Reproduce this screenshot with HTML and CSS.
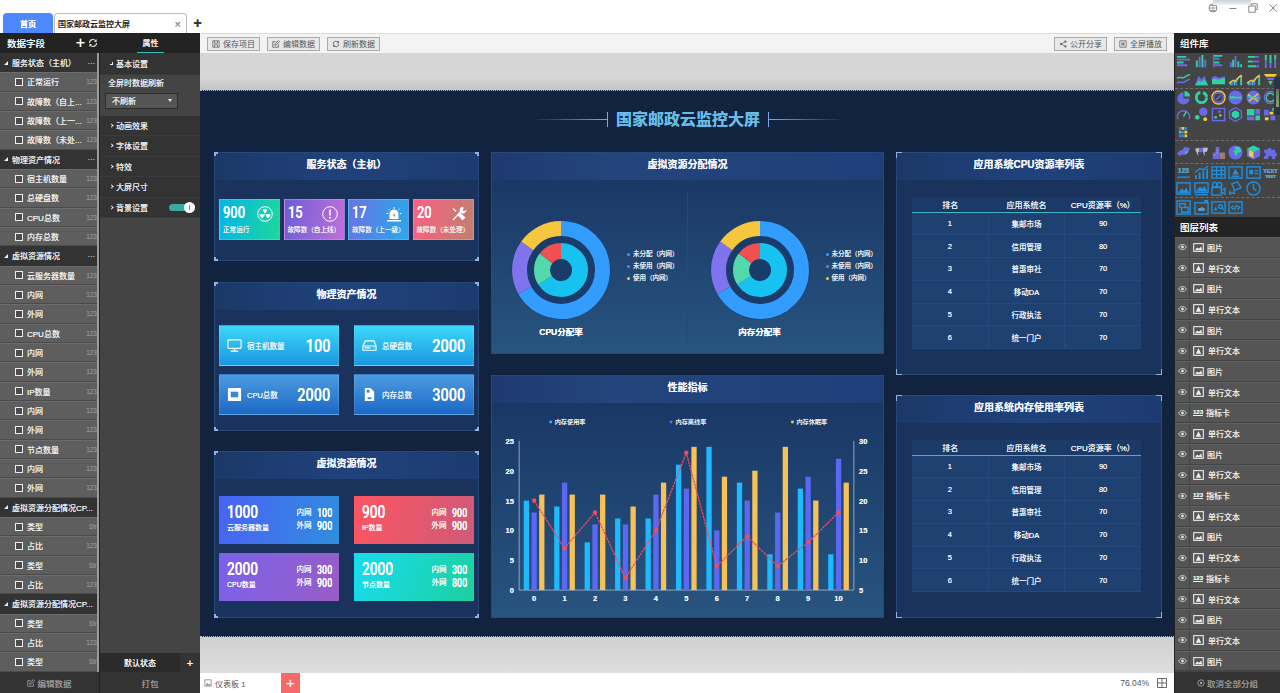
FILE: index.html
```html
<!DOCTYPE html>
<html lang="zh">
<head>
<meta charset="utf-8">
<title>国家邮政云监控大屏</title>
<link rel="stylesheet" href="styles.css">
</head>
<body>
<svg class="defs" width="0" height="0">
  <symbol id="i-pic" viewBox="0 0 12 10"><rect x=".7" y=".7" width="10.6" height="8.6" fill="none" stroke="#eee" stroke-width="1.2"/><path d="M2 8l2.500-3 2 1.500L9 4l1 4z" fill="#eee"/></symbol>
  <symbol id="i-txt" viewBox="0 0 12 11"><rect x=".7" y=".7" width="10.600" height="9.600" fill="none" stroke="#eee" stroke-width="1.200"/><path d="M6 2.500L9 8.500H3z" fill="#eee"/></symbol>
  <symbol id="i-eye" viewBox="0 0 10 7"><path d="M.5 3.500C2 1 3.500.5 5 .5s3 .5 4.500 3C8 6 6.500 6.500 5 6.500S2 6 .5 3.500z" fill="none" stroke="#ddd"/><circle cx="5" cy="3.500" r="1.700" fill="#ddd"/></symbol>
  <symbol id="donut" viewBox="0 0 100 100">
    <circle cx="50" cy="50" r="49.500" fill="#1a3c6a"/>
    <g fill="none" transform="rotate(-90 50 50)">
      <circle class="d-blue" cx="50" cy="50" r="41.500" stroke-width="15" stroke-dasharray="174 260.800"/>
      <circle class="d-purple" cx="50" cy="50" r="41.500" stroke-width="15" stroke-dasharray="47 260.800" stroke-dashoffset="-174"/>
      <circle class="d-yellow" cx="50" cy="50" r="41.500" stroke-width="15" stroke-dasharray="39.800 260.800" stroke-dashoffset="-221"/>
      <circle class="d-cyan" cx="50" cy="50" r="19" stroke-width="16" stroke-dasharray="78 119.400"/>
      <circle class="d-green" cx="50" cy="50" r="19" stroke-width="16" stroke-dasharray="23.500 119.400" stroke-dashoffset="-78"/>
      <circle class="d-red" cx="50" cy="50" r="19" stroke-width="16" stroke-dasharray="17.900 119.400" stroke-dashoffset="-101.500"/>
    </g>
  </symbol>
</svg>

<header class="tabbar">
  <div class="tab-home">首页</div>
  <div class="tab-doc"><span>国家邮政云监控大屏</span><span class="tab-x">×</span></div>
  <div class="tab-add">+</div>
  <div class="winctl">
    <svg class="w-ico" viewBox="0 0 10 10"><circle cx="5" cy="5" r="4" fill="none" stroke="#888"/><path d="M1 5h8M5 1v8M2 2.500h6M2 7.500h6" stroke="#888" stroke-width=".7"/></svg>
    <svg class="w-ico" viewBox="0 0 10 10"><path d="M1.500 5.500h7" stroke="#888"/></svg>
    <svg class="w-ico" viewBox="0 0 10 10"><path d="M3.500 2.500V.8h5.700v5.700H7.500M.8 3h6.500v6.200H.8z" fill="none" stroke="#888"/></svg>
    <svg class="w-ico" viewBox="0 0 10 10"><path d="M1.500 1.500l7 7M8.500 1.500l-7 7" stroke="#888"/></svg>
  </div>
  <div class="win-strip"></div>
</header>

<div class="app">
  <aside class="fields">
    <div class="dark-head fields-head"><span>数据字段</span><span class="head-tools"><b>+</b><svg class="refresh" viewBox="0 0 10 10"><path d="M1.500 5a3.500 3.500 0 0 1 6.500-1.800M8.500 5A3.500 3.500 0 0 1 2 6.800" fill="none" stroke="#ddd" stroke-width="1.100"/><path d="M8.600 1v3H6M1.400 9V6H4" fill="#ddd"/></svg></span></div>
    <div class="field-list">
      <div class="f-group"><i class="tri"></i><span class="f-name">服务状态（主机）</span><em>···</em></div>
      <div class="f-row"><i class="chk"></i><span class="f-name">正常运行</span><u>123</u></div>
      <div class="f-row"><i class="chk"></i><span class="f-name">故障数（自上...</span><u>123</u></div>
      <div class="f-row"><i class="chk"></i><span class="f-name">故障数（上一...</span><u>123</u></div>
      <div class="f-row"><i class="chk"></i><span class="f-name">故障数（未处...</span><u>123</u></div>
      <div class="f-group"><i class="tri"></i><span class="f-name">物理资产情况</span><em>···</em></div>
      <div class="f-row"><i class="chk"></i><span class="f-name">宿主机数量</span><u>123</u></div>
      <div class="f-row"><i class="chk"></i><span class="f-name">总硬盘数</span><u>123</u></div>
      <div class="f-row"><i class="chk"></i><span class="f-name">CPU总数</span><u>123</u></div>
      <div class="f-row"><i class="chk"></i><span class="f-name">内存总数</span><u>123</u></div>
      <div class="f-group"><i class="tri"></i><span class="f-name">虚拟资源情况</span><em>···</em></div>
      <div class="f-row"><i class="chk"></i><span class="f-name">云服务器数量</span><u>123</u></div>
      <div class="f-row"><i class="chk"></i><span class="f-name">内网</span><u>123</u></div>
      <div class="f-row"><i class="chk"></i><span class="f-name">外网</span><u>123</u></div>
      <div class="f-row"><i class="chk"></i><span class="f-name">CPU总数</span><u>123</u></div>
      <div class="f-row"><i class="chk"></i><span class="f-name">内网</span><u>123</u></div>
      <div class="f-row"><i class="chk"></i><span class="f-name">外网</span><u>123</u></div>
      <div class="f-row"><i class="chk"></i><span class="f-name">IP数量</span><u>123</u></div>
      <div class="f-row"><i class="chk"></i><span class="f-name">内网</span><u>123</u></div>
      <div class="f-row"><i class="chk"></i><span class="f-name">外网</span><u>123</u></div>
      <div class="f-row"><i class="chk"></i><span class="f-name">节点数量</span><u>123</u></div>
      <div class="f-row"><i class="chk"></i><span class="f-name">内网</span><u>123</u></div>
      <div class="f-row"><i class="chk"></i><span class="f-name">外网</span><u>123</u></div>
      <div class="f-group"><i class="tri"></i><span class="f-name">虚拟资源分配情况CP...</span></div>
      <div class="f-row"><i class="chk"></i><span class="f-name">类型</span><u>Str</u></div>
      <div class="f-row"><i class="chk"></i><span class="f-name">占比</span><u>123</u></div>
      <div class="f-row"><i class="chk"></i><span class="f-name">类型</span><u>Str</u></div>
      <div class="f-row"><i class="chk"></i><span class="f-name">占比</span><u>123</u></div>
      <div class="f-group"><i class="tri"></i><span class="f-name">虚拟资源分配情况CP...</span></div>
      <div class="f-row"><i class="chk"></i><span class="f-name">类型</span><u>Str</u></div>
      <div class="f-row"><i class="chk"></i><span class="f-name">占比</span><u>123</u></div>
      <div class="f-row"><i class="chk"></i><span class="f-name">类型</span><u>Str</u></div>
    </div>
    <div class="foot">
      <svg class="foot-ico" viewBox="0 0 10 10"><path d="M8 5.500V9H1V2h3.500M3.500 6.500l.3-1.800L8 .8 9.400 2.200 5.300 6.200z" fill="none" stroke="#aaa"/></svg>编辑数据
    </div>
  </aside>

  <aside class="props">
    <div class="dark-head props-head"><span class="props-tab">属性</span></div>
    <div class="p-sec p-open"><i class="arr-d"></i>基本设置</div>
    <div class="p-body">
      <div class="p-label">全屏时数据刷新</div>
      <div class="p-select"><span>不刷新</span><i></i></div>
    </div>
    <div class="p-sec"><i class="arr-r"></i>动画效果</div>
    <div class="p-sec"><i class="arr-r"></i>字体设置</div>
    <div class="p-sec"><i class="arr-r"></i>特效</div>
    <div class="p-sec"><i class="arr-r"></i>大屏尺寸</div>
    <div class="p-sec"><i class="arr-r"></i>背景设置<span class="switch"><i></i></span></div>
    <div class="p-fill"></div>
    <div class="state-row"><span class="state-name">默认状态</span><span class="state-add">+</span></div>
    <div class="foot">打包</div>
  </aside>

  <main class="center">
    <div class="toolbar">
      <div class="tb-btn"><svg viewBox="0 0 10 10"><path d="M1 1h8v8H1zM3 1v3h4V1M3 9V6h4v3" fill="none" stroke="#666"/></svg>保存项目</div>
      <div class="tb-btn"><svg viewBox="0 0 10 10"><path d="M8 5.500V9H1V2h3.500M3.500 6.500l.3-1.800L8 .8 9.400 2.200 5.300 6.200z" fill="none" stroke="#555"/></svg>编辑数据</div>
      <div class="tb-btn"><svg viewBox="0 0 10 10"><path d="M1.500 5a3.500 3.500 0 0 1 6.500-1.800M8.500 5A3.500 3.500 0 0 1 2 6.800" fill="none" stroke="#555"/><path d="M8.600 1v3H6M1.400 9V6H4" fill="#555"/></svg>刷新数据</div>
      <div class="tb-gap"></div>
      <div class="tb-btn"><svg viewBox="0 0 10 10"><path d="M8 2L2.500 5 8 8" fill="none" stroke="#666"/><circle cx="8" cy="2" r="1.400" fill="#666"/><circle cx="2.500" cy="5" r="1.400" fill="#666"/><circle cx="8" cy="8" r="1.400" fill="#666"/></svg>公开分享</div>
      <div class="tb-btn"><svg viewBox="0 0 10 10"><path d="M1 1h8v8H1z" fill="none" stroke="#666"/><path d="M3 3h4v4H3z" fill="#888"/></svg>全屏播放</div>
    </div>
    <div class="stage">
      <div class="screen">
        <div class="screen-title">
          <i class="deco deco-l"></i><i class="tick"></i>
          <h1>国家邮政云监控大屏</h1>
          <i class="tick"></i><i class="deco deco-r"></i>
        </div>
        <div class="board">
          <div class="col col-a">
            <section class="panel corners p-status">
              <h2>服务状态（主机）</h2>
              <div class="status-cards">
                <div class="s-card c-teal"><div class="s-top"><span class="digi">900</span>
                  <svg viewBox="0 0 16 16"><circle cx="8" cy="8" r="7.300" fill="none" stroke="#fff"/><path d="M8 7.800L5.500 3.800a5 5 0 0 1 5 0zM8 8.200l2.500 4a5 5 0 0 0 3-4.200zM8 8.200H2.600a5 5 0 0 0 3 4.200z" fill="#fff"/></svg></div><div class="s-name">正常运行</div></div>
                <div class="s-card c-violet"><div class="s-top"><span class="digi">15</span>
                  <svg viewBox="0 0 16 16"><circle cx="8" cy="8" r="7.300" fill="none" stroke="#fff"/><path d="M8 3.500v6" stroke="#fff" stroke-width="1.600"/><circle cx="8" cy="11.800" r="1" fill="#fff"/></svg></div><div class="s-name">故障数（自上线）</div></div>
                <div class="s-card c-azure"><div class="s-top"><span class="digi">17</span>
                  <svg viewBox="0 0 16 16"><path d="M3.500 13V8a4.500 4.500 0 0 1 9 0v5zM1 14h14v1.500H1z" fill="#fff"/><path d="M8 1v1.800M2.500 3l1.300 1.300M13.500 3l-1.300 1.300M.6 7.500h1.600M13.800 7.500h1.600" stroke="#fff"/><path d="M8.800 6.500L6.700 9.500h1.500l-.8 2.500 2.200-3.200H8z" fill="#3a90e0"/></svg></div><div class="s-name">故障数（上一级）</div></div>
                <div class="s-card c-rose"><div class="s-top"><span class="digi">20</span>
                  <svg viewBox="0 0 16 16"><path d="M2 14L11 4.500M11 1.500a3 3 0 0 0-1.500 4l1 1a3 3 0 0 0 4-1.500l-2 1-1.500-1.500 1-2.500z" fill="#fff" stroke="#fff" stroke-width="1.200"/><path d="M2.500 2l-1 1 3 3 1-1zM6 8.500l5.500 6 3-3L8.500 6z" fill="#fff"/></svg></div><div class="s-name">故障数（未处理）</div></div>
              </div>
            </section>

            <section class="panel corners p-phys">
              <h2>物理资产情况</h2>
              <div class="phys-grid">
                <div class="ph-card ph-cyan"><svg viewBox="0 0 16 14"><rect x="1" y="1" width="14" height="9" rx="1" fill="none" stroke="#fff" stroke-width="1.200"/><path d="M4 13h8M8 10v3" stroke="#fff" stroke-width="1.200"/></svg><span class="ph-name">宿主机数量</span><span class="digi digi-l">100</span></div>
                <div class="ph-card ph-cyan"><svg viewBox="0 0 16 14"><path d="M1 7.500L3.500 2h9L15 7.500V12H1zM1 7.500h14" fill="none" stroke="#fff" stroke-width="1.200"/><path d="M3 9.500h6M12 9.500h1" stroke="#fff" stroke-width="1.200"/></svg><span class="ph-name">总硬盘数</span><span class="digi digi-l">2000</span></div>
                <div class="ph-card ph-blue"><svg viewBox="0 0 16 16"><rect x="1" y="1" width="14" height="14" rx="1" fill="#fff"/><rect x="4" y="5" width="8" height="6" fill="#3a85d8"/></svg><span class="ph-name">CPU总数</span><span class="digi digi-l">2000</span></div>
                <div class="ph-card ph-blue"><svg viewBox="0 0 16 16"><path d="M3 1h6l4 4v10H3z" fill="#fff"/><rect x="5" y="3" width="3" height="3" fill="#3a85d8"/><rect x="6" y="11" width="4" height="2" fill="#3a85d8"/></svg><span class="ph-name">内存总数</span><span class="digi digi-l">3000</span></div>
              </div>
            </section>

            <section class="panel corners p-virt">
              <h2>虚拟资源情况</h2>
              <div class="virt-grid">
                <div class="v-card v-blue"><div class="v-main"><span class="digi digi-l">1000</span><span class="v-name">云服务器数量</span></div><div class="v-side"><div><span>内网</span><span class="digi">100</span></div><div><span>外网</span><span class="digi">900</span></div></div></div>
                <div class="v-card v-red"><div class="v-main"><span class="digi digi-l">900</span><span class="v-name">IP数量</span></div><div class="v-side"><div><span>内网</span><span class="digi">900</span></div><div><span>外网</span><span class="digi">900</span></div></div></div>
                <div class="v-card v-purple"><div class="v-main"><span class="digi digi-l">2000</span><span class="v-name">CPU数量</span></div><div class="v-side"><div><span>内网</span><span class="digi">300</span></div><div><span>外网</span><span class="digi">900</span></div></div></div>
                <div class="v-card v-teal"><div class="v-main"><span class="digi digi-l">2000</span><span class="v-name">节点数量</span></div><div class="v-side"><div><span>内网</span><span class="digi">300</span></div><div><span>外网</span><span class="digi">800</span></div></div></div>
              </div>
            </section>
          </div>

          <div class="col col-b">
            <section class="panel p-alloc">
              <h2>虚拟资源分配情况</h2>
              <div class="alloc">
                <div class="alloc-half">
                  <div class="donut-wrap"><svg class="donut"><use href="#donut"/></svg><div class="donut-name">CPU分配率</div></div>
                  <ul class="legend"><li class="l-b">未分配（内网）</li><li class="l-p">未使用（内网）</li><li class="l-y">使用（内网）</li></ul>
                </div>
                <div class="alloc-half">
                  <div class="donut-wrap"><svg class="donut"><use href="#donut"/></svg><div class="donut-name">内存分配率</div></div>
                  <ul class="legend"><li class="l-b">未分配（内网）</li><li class="l-p">未使用（内网）</li><li class="l-y">使用（内网）</li></ul>
                </div>
              </div>
            </section>
            <section class="panel p-perf">
              <h2>性能指标</h2>
              <svg class="chart" viewBox="0 0 393 215">
                <g class="leg-t">
                  <circle class="s-c" cx="59" cy="19" r="1.500"/><text x="63" y="21.500">内存使用率</text>
                  <circle class="s-p" cx="180" cy="19" r="1.500"/><text x="184.500" y="21.500">内存离线率</text>
                  <circle class="s-y" cx="302" cy="19" r="1.500"/><text x="306" y="21.500">内存休眠率</text>
                </g>
                <path class="axis" d="M27.300 38V188H363.700V38"/>
                <g class="ax-t">
                  <text x="22" y="191" text-anchor="end">0</text><text x="22" y="161" text-anchor="end">5</text><text x="22" y="131" text-anchor="end">10</text><text x="22" y="101" text-anchor="end">15</text><text x="22" y="71" text-anchor="end">20</text><text x="22" y="41" text-anchor="end">25</text>
                  <text x="369" y="191">5</text><text x="369" y="161">10</text><text x="369" y="131">15</text><text x="369" y="101">20</text><text x="369" y="71">25</text><text x="369" y="41">30</text>
                  <text x="42.300" y="199" text-anchor="middle">0</text><text x="72.900" y="199" text-anchor="middle">1</text><text x="103.500" y="199" text-anchor="middle">2</text><text x="134.100" y="199" text-anchor="middle">3</text><text x="164.700" y="199" text-anchor="middle">4</text><text x="195.300" y="199" text-anchor="middle">5</text><text x="225.900" y="199" text-anchor="middle">6</text><text x="256.500" y="199" text-anchor="middle">7</text><text x="287.100" y="199" text-anchor="middle">8</text><text x="317.700" y="199" text-anchor="middle">9</text><text x="348.300" y="199" text-anchor="middle">10</text>
                </g>
                <g class="s-c">
                  <rect x="31.900" y="98" width="5.300" height="90"/><rect x="62.500" y="104" width="5.300" height="84"/><rect x="93.100" y="140" width="5.300" height="48"/><rect x="123.700" y="116" width="5.300" height="72"/><rect x="154.300" y="116" width="5.300" height="72"/><rect x="184.900" y="62" width="5.300" height="126"/><rect x="215.500" y="44" width="5.300" height="144"/><rect x="246.100" y="80" width="5.300" height="108"/><rect x="276.700" y="152" width="5.300" height="36"/><rect x="307.300" y="86" width="5.300" height="102"/><rect x="337.900" y="152" width="5.300" height="36"/>
                </g>
                <g class="s-p">
                  <rect x="39.700" y="110" width="5.300" height="78"/><rect x="70.300" y="80" width="5.300" height="108"/><rect x="100.900" y="122" width="5.300" height="66"/><rect x="131.500" y="122" width="5.300" height="66"/><rect x="162.100" y="92" width="5.300" height="96"/><rect x="192.700" y="86" width="5.300" height="102"/><rect x="223.300" y="128" width="5.300" height="60"/><rect x="253.900" y="98" width="5.300" height="90"/><rect x="284.500" y="110" width="5.300" height="78"/><rect x="315.100" y="74" width="5.300" height="114"/><rect x="345.700" y="56" width="5.300" height="132"/>
                </g>
                <g class="s-y">
                  <rect x="47.400" y="92" width="5.300" height="96"/><rect x="78" y="92" width="5.300" height="96"/><rect x="108.600" y="92" width="5.300" height="96"/><rect x="139.200" y="104" width="5.300" height="84"/><rect x="169.800" y="80" width="5.300" height="108"/><rect x="200.400" y="44" width="5.300" height="144"/><rect x="231" y="74" width="5.300" height="114"/><rect x="261.600" y="68" width="5.300" height="120"/><rect x="292.200" y="44" width="5.300" height="144"/><rect x="322.800" y="98" width="5.300" height="90"/><rect x="353.400" y="80" width="5.300" height="108"/>
                </g>
                <polyline class="trend" points="42.300,98 72.900,146 103.500,110 134.100,176 164.700,128 195.300,50 225.900,164 256.500,134 287.100,164 317.700,140 348.300,110"/>
                <g class="s-r">
                  <circle cx="42.300" cy="98" r="2.200"/><circle cx="72.900" cy="146" r="2.200"/><circle cx="103.500" cy="110" r="2.200"/><circle cx="134.100" cy="176" r="2.200"/><circle cx="164.700" cy="128" r="2.200"/><circle cx="195.300" cy="50" r="2.200"/><circle cx="225.900" cy="164" r="2.200"/><circle cx="256.500" cy="134" r="2.200"/><circle cx="287.100" cy="164" r="2.200"/><circle cx="317.700" cy="140" r="2.200"/><circle cx="348.300" cy="110" r="2.200"/>
                </g>
              </svg>
            </section>
          </div>

          <div class="col col-c">
            <section class="panel corners corners-big p-table">
              <h2>应用系统CPU资源率列表</h2>
              <table class="rank">
                <thead><tr><th>排名</th><th>应用系统名</th><th>CPU资源率（%）</th></tr></thead>
                <tbody>
                  <tr><td>1</td><td>集邮市场</td><td>90</td></tr>
                  <tr><td>2</td><td>信用管理</td><td>80</td></tr>
                  <tr><td>3</td><td>普惠审社</td><td>70</td></tr>
                  <tr><td>4</td><td>移动DA</td><td>70</td></tr>
                  <tr><td>5</td><td>行政执法</td><td>70</td></tr>
                  <tr><td>6</td><td>统一门户</td><td>70</td></tr>
                </tbody>
              </table>
            </section>
            <section class="panel corners corners-big p-table">
              <h2>应用系统内存使用率列表</h2>
              <table class="rank">
                <thead><tr><th>排名</th><th>应用系统名</th><th>CPU资源率（%）</th></tr></thead>
                <tbody>
                  <tr><td>1</td><td>集邮市场</td><td>90</td></tr>
                  <tr><td>2</td><td>信用管理</td><td>80</td></tr>
                  <tr><td>3</td><td>普惠审社</td><td>70</td></tr>
                  <tr><td>4</td><td>移动DA</td><td>70</td></tr>
                  <tr><td>5</td><td>行政执法</td><td>70</td></tr>
                  <tr><td>6</td><td>统一门户</td><td>70</td></tr>
                </tbody>
              </table>
            </section>
          </div>
        </div>
      </div>
    </div>
    <div class="bottombar">
      <div class="sheet"><svg viewBox="0 0 10 10"><path d="M1 1h8v8H1z" fill="none" stroke="#888"/><path d="M2 8l2-3 2 2 2-1v2z" fill="#888"/></svg>仪表板 1</div>
      <div class="sheet-add">+</div>
      <div class="zoom-val">76.04%</div>
      <svg class="zoom-ico" viewBox="0 0 10 10"><path d="M.5.500h9v9h-9zM5 .5v9M.5 5h9" fill="none" stroke="#666"/></svg>
    </div>
  </main>

  <aside class="right">
    <div class="dark-head lib-head">组件库</div>
    <div class="lib">
      <div class="lib-grid lg-1">
        <svg viewBox="0 0 16 16"><path class="g" d="M1 2h10v2H1zM1 8h7v2H1z"/><path class="p" d="M1 5h14v2H1zM1 11h11v2H1z"/></svg>
        <svg viewBox="0 0 16 16"><path class="g" d="M2 7h2v7H2zM8 1h2v13H8z"/><path class="p" d="M5 3h2v11H5zM11 6h2v8h-2z"/></svg>
        <svg viewBox="0 0 16 16"><path class="g" d="M3 1h9v2H3zM3 8h6v2H3z"/><path class="p" d="M3 4h6v2H3zM3 11h9v2H3zM2 0h1v15H2z"/></svg>
        <svg viewBox="0 0 16 16"><path class="p" d="M2 9h2v5H2zM7 2h2v12H7z"/><path class="g" d="M4.500 6h2v8h-2zM10 8h2v6h-2zM13 11h2v3h-2z"/></svg>
        <svg viewBox="0 0 16 16"><path class="g" d="M2 2h8v2H2zM2 7h5v2H2zM2 12h9v2H2z"/><path class="p" d="M10 2h4v2h-4zM7 7h7v2H7zM11 12h3v2h-3z"/></svg>
        <svg viewBox="0 0 16 16"><path class="g" d="M2 1h2v6H2zM7 1h2v9H7zM12 1h2v5h-2z"/><path class="p" d="M2 7h2v8H2zM7 10h2v5H7zM12 6h2v9h-2z"/></svg>
        <svg viewBox="0 0 16 16"><path class="lg" d="M1 7c3-3 4 0 7-1s4-3 7-3"/><path class="lp" d="M1 12c3-3 4 0 7-1s4-3 7-3"/></svg>
        <svg viewBox="0 0 16 16"><path class="p" d="M1 14L5 4l3 4 3-4 4 10z"/><path class="g" d="M1 14l4-5 3 2 3-3 4 6z"/></svg>
        <svg viewBox="0 0 16 16"><path class="p" d="M1 6c3-3 5-1 7 0s5-2 7-1v4H1z"/><path class="g" d="M1 8c3-2 5 0 7 0s5-2 7-1v6H1z"/></svg>
        <svg viewBox="0 0 16 16"><path class="g" d="M2 10h2v4H2zM6 8h2v6H6zM13 3h2v11h-2z"/><path class="p" d="M4 11h1.500v3H4zM8.500 6H10v8H8.500z"/><path class="ly" d="M1 12l4-3 3 1 4-5 3-1"/></svg>
        <svg viewBox="0 0 16 16"><path class="g" d="M2 10h2v4H2zM6 8h2v6H6zM13 3h2v11h-2z"/><path class="p" d="M4 11h1.500v3H4zM8.500 6H10v8H8.500z"/><path class="ly" d="M1 12l4-3 3 1 4-5 3-1"/></svg>
        <svg viewBox="0 0 16 16"><path class="y" d="M1 2h14l-2 3H3z"/><path class="p" d="M3.500 6h9l-1.500 2.500H5z"/><path class="g" d="M5.500 9.500h5L8 14z"/></svg>
      </div>
      <div class="lib-grid lg-2">
        <svg viewBox="0 0 16 16"><path class="p" d="M8 2.500a6.500 6.500 0 1 0 6.500 6.500H8z"/><path class="g" d="M9 1a6 6 0 0 1 6 6H9z"/></svg>
        <svg viewBox="0 0 16 16"><circle class="rg" cx="8" cy="8" r="5.500" stroke-dasharray="24 3 6 2"/></svg>
        <svg viewBox="0 0 16 16"><circle class="ry" cx="8" cy="8" r="7"/><circle class="rp" cx="8" cy="8" r="5"/><path class="lp" d="M5.500 10.500l5-5"/></svg>
        <svg viewBox="0 0 16 16"><circle class="p" cx="8" cy="8" r="7.500"/><path class="g" d="M2 7c3-1 6 1 12 0v2H2z"/></svg>
        <svg viewBox="0 0 16 16"><circle cx="8" cy="8" r="7.500" class="p"/><path class="ly" d="M2 5l11 7M3 12l10-8"/><path class="lg" d="M2 8c4-3 8 3 12 0"/></svg>
        <svg viewBox="0 0 16 16"><circle class="rp" cx="8" cy="8" r="6.500"/><path class="lg" d="M12 6a4.500 4.500 0 1 0 0 4"/></svg>
        <svg viewBox="0 0 16 16"><path class="rp" d="M2 13a6.500 6.500 0 1 1 12 0"/><path class="lg" d="M8 10l3-5"/></svg>
        <svg viewBox="0 0 16 16"><circle class="p" cx="10" cy="5" r="4.500"/><circle class="g" cx="3.500" cy="11" r="2.500"/><circle class="y" cx="12" cy="13" r="2"/></svg>
        <svg viewBox="0 0 16 16"><rect class="rp" x="1.500" y="1.500" width="13" height="13"/><circle class="g" cx="5" cy="11" r="1.500"/><circle class="y" cx="10" cy="9" r="1.200"/><circle class="p" cx="9" cy="5" r="1.500"/></svg>
        <svg viewBox="0 0 16 16"><path class="rp" d="M8 .8l6.300 3.600v7.200L8 15.200l-6.300-3.600V4.400z"/><path class="g" d="M8 3.500l4 2.300v4.400l-4 2.300-4-2.300V5.800z"/></svg>
        <svg viewBox="0 0 16 16"><path class="g" d="M1 2h8v7H1zM10 9h5v5h-5z"/><path class="p" d="M10 2h5v6h-5zM1 10h8v4H1z"/></svg>
        <svg viewBox="0 0 16 16"><path class="p" d="M1 3h5v6H1zM8 9h5v5H8z"/><path class="y" d="M7 5h4v3H7zM2 11h4v3H2z"/><path class="g" d="M10 1h4v3h-4z"/></svg>
        <svg viewBox="0 0 16 16"><path class="p" d="M3 2h3v3H3zM3 10h3v3H3zM6 6h3v3H6z"/><path class="g" d="M3 6h3v3H3z"/><path class="y" d="M6 2h3v3H6zM9 6h3v3H9zM9 10h3v3H9z"/><path class="b" d="M9 2h3v3H9zM6 10h3v3H6z"/></svg>
      </div>
      <div class="lib-grid lg-3">
        <svg viewBox="0 0 16 16"><path class="p" d="M1 9l3-3 3-1 2-3 6 1-2 5-4 3-3-1-2 2z"/><path class="g" d="M10 7l3-1-1 3-2 1z"/></svg>
        <svg viewBox="0 0 16 16"><path class="gray" d="M1 4l4-1 1 4-2 1 1 4-2-3zM9 3h6l-1 4-3 1 1 4-2-3z"/><path class="p" d="M5 3l4 0 1 4-4 1z"/></svg>
        <svg viewBox="0 0 16 16"><path class="p" d="M2 8h3v7H2zM5 2h4v13H5z"/><path class="brown" d="M9 8h6v7H9z"/><path class="y" d="M3 10h1v1H3zM6 5h1v1H6zM6 8h1v1H6zM11 10h1v1h-1z"/></svg>
        <svg viewBox="0 0 16 16"><circle class="p" cx="8" cy="8" r="7.500"/><path class="g" d="M7 1.500l6 1 1 5-4 1-1 4-2-4-2-2 3-1z"/></svg>
        <svg viewBox="0 0 16 16"><path class="p" d="M8 .5l7 3.500v8l-7 3.500L1 12V4z"/><path class="y" d="M3 5l5 2.500V14l-5-2.500z"/><path class="g" d="M8 .5l7 3.500-7 3.500L1 4z"/></svg>
        <svg viewBox="0 0 16 16"><path class="p" d="M1 5h4a2 2 0 1 1 4 0h4v3a2 2 0 1 1 0 4v3H9a2 2 0 1 0-3 0H1v-3a2 2 0 1 0 0-4z"/></svg>
      </div>
      <div class="lib-grid lg-4">
        <svg viewBox="0 0 16 16"><text class="ic-t" x="8" y="9" text-anchor="middle">123</text><path class="lb" d="M1 13h14"/></svg>
        <svg viewBox="0 0 16 16"><path class="b" d="M1 11h2v4H1zM5 8h2v7H5zM9 6h2v9H9zM13 4h2v11h-2z"/><path class="lb" d="M1 8l5-4 4 1 5-4"/></svg>
        <svg viewBox="0 0 16 16"><path class="rb" d="M1 2h14v12H1zM1 6h14M1 10h14M6 2v12M11 2v12"/></svg>
        <svg viewBox="0 0 16 16"><rect class="rb" x="1" y="2" width="14" height="12"/><path class="b" d="M8 4l3.500 6h-7z"/><path class="lb" d="M4 12h8"/></svg>
        <svg viewBox="0 0 16 16"><rect class="rb" x="1" y="2" width="14" height="12"/><path class="b" d="M3.500 5h4v5h-4z"/><path class="lb" d="M9 6h4M9 9h4"/></svg>
        <svg viewBox="0 0 16 16"><text class="ic-t ic-s" x="8" y="8" text-anchor="middle">TEXT</text><text class="ic-t ic-xs" x="8" y="14" text-anchor="middle">TEXT</text></svg>
        <svg viewBox="0 0 16 16"><rect class="rb" x="1" y="2" width="14" height="12"/><path class="b" d="M2 13l4-5 3 2 2-3 3 6z"/></svg>
        <svg viewBox="0 0 16 16"><rect class="rb" x="1" y="2" width="14" height="10"/><path class="b" d="M2 11l4-5 3 2 2-3 3 6z"/><path class="lb" d="M1 14.500h14"/></svg>
        <svg viewBox="0 0 16 16"><rect class="rb" x="1" y="7" width="10" height="8"/><circle class="rb" cx="4" cy="4" r="2.500"/><circle class="rb" cx="9" cy="4" r="2.500"/><path class="lb" d="M11 10l4-2v6l-4-2"/></svg>
        <svg viewBox="0 0 16 16"><path class="rb" d="M4 3l6-2 4 6-7 3zM6 10l1 3H2M2 10v5"/></svg>
        <svg viewBox="0 0 16 16"><circle class="rb" cx="8" cy="8" r="7"/><path class="lb" d="M8 3v5l3 2"/></svg>
      </div>
      <div class="lib-grid lg-5">
        <svg viewBox="0 0 16 16"><rect class="rb" x="1" y="1" width="14" height="14"/><path class="rb" d="M4 4h6v4H4zM6 8h7v5H6z"/></svg>
        <svg viewBox="0 0 16 16"><rect class="rb" x="1" y="3" width="14" height="12"/><text class="ic-t ic-s" x="8" y="12" text-anchor="middle">ab</text><path class="b" d="M11 0h4v3h-4z"/></svg>
        <svg viewBox="0 0 16 16"><rect class="rb" x="1" y="2" width="14" height="12"/><path class="b" d="M3 11l2-4 2 4z"/><circle class="rb" cx="10" cy="7" r="2"/><path class="lb" d="M11.500 8.500l2 2"/></svg>
        <svg viewBox="0 0 16 16"><rect class="rb" x="1" y="2" width="14" height="12"/><path class="lb" d="M6 6L3.500 8 6 10M10 6l2.500 2L10 10M9 5l-2 6"/></svg>
      </div>
    </div>
    <div class="dark-head layer-head">图层列表</div>
    <div class="layers">
      <div class="l-row"><span class="l-eye"><svg><use href="#i-eye"/></svg></span><svg class="l-ico"><use href="#i-pic"/></svg><span>图片</span></div>
      <div class="l-row"><span class="l-eye"><svg><use href="#i-eye"/></svg></span><svg class="l-ico l-t"><use href="#i-txt"/></svg><span>单行文本</span></div>
      <div class="l-row"><span class="l-eye"><svg><use href="#i-eye"/></svg></span><svg class="l-ico"><use href="#i-pic"/></svg><span>图片</span></div>
      <div class="l-row"><span class="l-eye"><svg><use href="#i-eye"/></svg></span><svg class="l-ico l-t"><use href="#i-txt"/></svg><span>单行文本</span></div>
      <div class="l-row"><span class="l-eye"><svg><use href="#i-eye"/></svg></span><svg class="l-ico"><use href="#i-pic"/></svg><span>图片</span></div>
      <div class="l-row"><span class="l-eye"><svg><use href="#i-eye"/></svg></span><svg class="l-ico l-t"><use href="#i-txt"/></svg><span>单行文本</span></div>
      <div class="l-row"><span class="l-eye"><svg><use href="#i-eye"/></svg></span><svg class="l-ico"><use href="#i-pic"/></svg><span>图片</span></div>
      <div class="l-row"><span class="l-eye"><svg><use href="#i-eye"/></svg></span><svg class="l-ico l-t"><use href="#i-txt"/></svg><span>单行文本</span></div>
      <div class="l-row"><span class="l-eye"><svg><use href="#i-eye"/></svg></span><b class="l-123">123</b><span>指标卡</span></div>
      <div class="l-row"><span class="l-eye"><svg><use href="#i-eye"/></svg></span><svg class="l-ico l-t"><use href="#i-txt"/></svg><span>单行文本</span></div>
      <div class="l-row"><span class="l-eye"><svg><use href="#i-eye"/></svg></span><svg class="l-ico"><use href="#i-pic"/></svg><span>图片</span></div>
      <div class="l-row"><span class="l-eye"><svg><use href="#i-eye"/></svg></span><svg class="l-ico l-t"><use href="#i-txt"/></svg><span>单行文本</span></div>
      <div class="l-row"><span class="l-eye"><svg><use href="#i-eye"/></svg></span><b class="l-123">123</b><span>指标卡</span></div>
      <div class="l-row"><span class="l-eye"><svg><use href="#i-eye"/></svg></span><svg class="l-ico l-t"><use href="#i-txt"/></svg><span>单行文本</span></div>
      <div class="l-row"><span class="l-eye"><svg><use href="#i-eye"/></svg></span><svg class="l-ico"><use href="#i-pic"/></svg><span>图片</span></div>
      <div class="l-row"><span class="l-eye"><svg><use href="#i-eye"/></svg></span><svg class="l-ico l-t"><use href="#i-txt"/></svg><span>单行文本</span></div>
      <div class="l-row"><span class="l-eye"><svg><use href="#i-eye"/></svg></span><b class="l-123">123</b><span>指标卡</span></div>
      <div class="l-row"><span class="l-eye"><svg><use href="#i-eye"/></svg></span><svg class="l-ico l-t"><use href="#i-txt"/></svg><span>单行文本</span></div>
      <div class="l-row"><span class="l-eye"><svg><use href="#i-eye"/></svg></span><svg class="l-ico"><use href="#i-pic"/></svg><span>图片</span></div>
      <div class="l-row"><span class="l-eye"><svg><use href="#i-eye"/></svg></span><svg class="l-ico l-t"><use href="#i-txt"/></svg><span>单行文本</span></div>
      <div class="l-row"><span class="l-eye"><svg><use href="#i-eye"/></svg></span><svg class="l-ico"><use href="#i-pic"/></svg><span>图片</span></div>
    </div>
    <div class="foot foot-layers"><svg class="foot-ico" viewBox="0 0 10 10"><circle cx="5" cy="5" r="4" fill="none" stroke="#aaa"/><circle cx="5" cy="5" r="1.500" fill="#aaa"/></svg>取消全部分组</div>
    <div class="lib-scroll"><i></i></div>
  </aside>
</div>
</body>
</html>
```

FILE: styles.css
```css
* { box-sizing: border-box; }
html, body { margin: 0; height: 693px; overflow: hidden; }
body { font-family: "Liberation Sans", "Noto Sans CJK SC", sans-serif; font-size: 8px; background: #fff; color: #fff; position: relative; text-shadow: 0 0 .6px currentColor; }
.defs { position: absolute; }
i, em, u { font-style: normal; text-decoration: none; }

/* top tabs */
.tabbar { height: 33px; background: #fff; display: flex; align-items: flex-end; padding-left: 3px; position: relative; color: #222; }
.tab-home { width: 50px; height: 20px; background: #4d88ff; border-radius: 4px 4px 0 0; color: #fff; font-weight: 700; display: flex; align-items: center; justify-content: center; }
.tab-doc { width: 133px; height: 20px; margin-left: 1px; border: 1px solid #bbb; border-bottom: 0; border-radius: 4px 4px 0 0; display: flex; align-items: center; justify-content: space-between; padding: 0 5px 0 3px; }
.tab-x { font-size: 11px; color: #888; }
.tab-add { margin-left: 5px; font-size: 14px; line-height: 20px; width: 11px; text-align: center; color: #333; font-weight: 700; }
.winctl { position: absolute; right: 2px; top: 3px; display: flex; gap: 10px; }
.w-ico { width: 10px; height: 10px; }
.win-strip { position: absolute; left: 1213px; top: 0; width: 38px; height: 5px; background: linear-gradient(#c9d3dc, #eef1f4); }

.app { display: flex; height: 660px; }

/* shared dark header */
.dark-head { height: 20px; flex: none; background: #232323; display: flex; align-items: center; font-size: 9.500px; }

/* data fields */
.fields { width: 100px; background: #3a3a3a; display: flex; flex-direction: column; border-right: 1px solid #222; }
.fields-head { justify-content: space-between; padding: 0 1px 0 7px; }
.head-tools { display: flex; align-items: center; gap: 3px; }
.head-tools b { font-size: 16px; font-weight: 400; line-height: 16px; }
.refresh { width: 10px; height: 10px; }
.field-list { flex: 1; overflow: hidden; border-right: 2px solid #9a9a9a; }
.f-group, .f-row { height: 19.340px; display: flex; align-items: center; white-space: nowrap; }
.f-group { background: #333; padding-left: 4px; position: relative; }
.f-row { background: #5e5e5e; border-top: 1px solid #6c6c6c; border-bottom: 1px solid #4a4a4a; padding-left: 15px; position: relative; }
.tri { width: 0; height: 0; border-style: solid; border-width: 0 0 4px 4px; border-color: transparent transparent #eee transparent; margin-right: 4px; }
.chk { width: 8px; height: 8px; border: 1px solid #eee; margin-right: 4px; flex: none; background: #4c4c4c; }
.f-name { color: #f0f0f0; overflow: hidden; }
.f-group em { position: absolute; right: 2px; color: #aaa; font-size: 9px; letter-spacing: -.5px; }
.f-row u { position: absolute; right: 0; color: #a0a0a0; font-size: 6.500px; text-shadow: none; }
.foot { height: 21px; flex: none; background: #333; color: #999; display: flex; align-items: center; justify-content: center; font-size: 8.500px; }
.foot-ico { width: 8px; height: 8px; margin-right: 2px; }

/* properties */
.props { width: 100px; background: #444; display: flex; flex-direction: column; }
.props-head { justify-content: center; }
.props-tab { height: 20px; width: 27px; font-size: 8px; display: flex; align-items: center; justify-content: center; border-bottom: 1px solid #3ec1c1; margin-left: 1px; }
.p-sec { height: 20.500px; background: #333; display: flex; align-items: center; padding-left: 10px; position: relative; color: #eee; border-bottom: 1px solid #3a3a3a; }
.p-open { height: 21.700px; }
.arr-r { width: 3px; height: 3px; border-top: 1px solid #eee; border-right: 1px solid #eee; transform: rotate(45deg); margin-right: 3px; }
.arr-d { width: 3px; height: 3px; border-bottom: 1px solid #eee; border-right: 1px solid #eee; margin-right: 3px; }
.p-body { height: 41px; background: #444; padding: 2px 0 0 8px; color: #eee; }
.p-label { height: 13px; line-height: 13px; }
.p-select { width: 73px; height: 16px; margin: 3px 0 0 -3px; background: #555; border: 1px solid #2e2e2e; display: flex; align-items: center; justify-content: space-between; padding: 0 5px 0 6px; }
.p-select i { border: solid transparent; border-width: 3px 2px 0; border-top-color: #eee; }
.switch { position: absolute; left: 69px; top: 6px; width: 26px; height: 7px; border-radius: 4px; background: #3aa99f; }
.switch i { position: absolute; right: 0; top: -2px; width: 11px; height: 11px; border-radius: 50%; background: #fff; }
.switch i::after { content: ""; position: absolute; left: 5px; top: 3px; width: 1px; height: 5px; background: #3aa99f; }
.p-fill { flex: 1; }
.state-row { height: 19px; display: flex; background: #333; }
.state-name { width: 80px; background: #2b2b2b; display: flex; align-items: center; justify-content: center; }
.state-add { flex: 1; display: flex; align-items: center; justify-content: center; font-size: 11px; }

/* center */
.center { width: 974px; display: flex; flex-direction: column; background: #d8d8d8; text-shadow: none; }
.toolbar { height: 20px; flex: none; background: #f3f3f3; border-top: 1px solid #ddd; display: flex; align-items: center; gap: 7px; padding: 0 7px; color: #555; }
.tb-btn { height: 14px; width: 53px; background: #e8e8e8; border: 1px solid #aaa; display: flex; align-items: center; justify-content: center; gap: 3px; }
.tb-btn svg { width: 8px; height: 8px; flex: none; }
.tb-gap { flex: 1; }
.stage { flex: 1; padding: 37px 0 35px; background: linear-gradient(#d6d6d6 0, #d6d6d6 24px, #c4c4c4 37px, #d8d8d8 38px, #d0d0d0 585px, #dedede 100%); }
.screen { height: 547px; background: #11233f; border-top: 1px dotted #b9c0c9; border-bottom: 1px dotted #b9c0c9; padding: 0 12px 0 14px; text-shadow: 0 0 .6px currentColor; }
.screen-title { height: 61px; display: flex; align-items: center; justify-content: center; padding-bottom: 4px; }
.screen-title h1 { margin: 0 8px; font-size: 16px; font-weight: 700; line-height: 20px; color: #66bde8; }
.tick { width: 1px; height: 15px; background: #7fa7dc; }
.deco { width: 76px; height: 1px; }
.deco-l { background: linear-gradient(90deg, transparent, #7fa7dc); }
.deco-r { background: linear-gradient(270deg, transparent, #7fa7dc); }

.board { display: grid; grid-template-columns: 265px 393px 266px; column-gap: 12px; }
.col { display: flex; flex-direction: column; }
.col-a { gap: 20.500px; }
.col-b { gap: 21px; }
.col-c { gap: 20px; }

.panel { position: relative; background: #19335c; border: 1px solid #26497a; }
.panel h2 { margin: 0; height: 27px; background: linear-gradient(90deg, #1b3868, #20427c 50%, #1c3b70); font-size: 10px; line-height: 24px; font-weight: 700; text-align: center; color: #f2f6fb; }
.corners::before { content: ""; position: absolute; inset: -1px; pointer-events: none;
  background:
    linear-gradient(#8fb3dc, #8fb3dc) 0 0 / 4px 2px no-repeat,
    linear-gradient(#8fb3dc, #8fb3dc) 0 0 / 2px 4px no-repeat,
    linear-gradient(#8fb3dc, #8fb3dc) 100% 0 / 4px 2px no-repeat,
    linear-gradient(#8fb3dc, #8fb3dc) 100% 0 / 2px 4px no-repeat,
    linear-gradient(#8fb3dc, #8fb3dc) 0 100% / 4px 2px no-repeat,
    linear-gradient(#8fb3dc, #8fb3dc) 0 100% / 2px 4px no-repeat,
    linear-gradient(#8fb3dc, #8fb3dc) 100% 100% / 4px 2px no-repeat,
    linear-gradient(#8fb3dc, #8fb3dc) 100% 100% / 2px 4px no-repeat; }
.corners-big::before { background-size: 6px 1px, 1px 6px, 6px 1px, 1px 6px, 6px 1px, 1px 6px, 6px 1px, 1px 6px; }

/* digits */
.digi { font-family: Roboto, "Liberation Sans", sans-serif; font-weight: 500; display: inline-block; transform: scaleX(.76); color: #fff; font-size: 15px; line-height: 15px; }
.digi-l { font-size: 18px; line-height: 18px; }

/* status */
.p-status { height: 109px; }
.status-cards { display: flex; gap: 3.500px; padding: 19px 4px 0 4px; }
.s-card { width: 61px; height: 41px; padding: 3px 2px 0 3px; border: 1px solid rgba(255, 255, 255, .18); }
.s-top { display: flex; justify-content: space-between; align-items: flex-start; height: 22px; padding-right: 4px; }
.s-top .digi { font-size: 17px; line-height: 18px; transform-origin: left center; }
.s-top svg { width: 16px; height: 16px; margin-top: 3px; }
.s-name { font-size: 6.600px; line-height: 10px; white-space: nowrap; color: #f4f4f4; }
.c-teal { background: linear-gradient(100deg, #03b5e8, #1fd79c); }
.c-violet { background: linear-gradient(100deg, #6a5ed8, #c26fd8); }
.c-azure { background: linear-gradient(100deg, #6a72e6, #27aae8); }
.c-rose { background: linear-gradient(100deg, #fa6080, #c08070); }

/* physical */
.p-phys { height: 149px; }
.phys-grid { display: grid; grid-template-columns: 119.500px 119.500px; column-gap: 15.500px; row-gap: 8px; padding: 15px 4px 0 4px; }
.ph-card { height: 41px; display: flex; align-items: center; padding-left: 7px; position: relative; border: 1px solid rgba(255, 255, 255, .12); }
.ph-card svg { width: 15px; height: 15px; margin-right: 5px; flex: none; }
.ph-name { font-size: 7.500px; color: #f4f8fc; white-space: nowrap; }
.ph-card .digi { position: absolute; right: 7px; top: 11px; transform-origin: right center; font-size: 19px; }
.ph-cyan { background: linear-gradient(#3cd8fc, #1997df); }
.ph-blue { background: linear-gradient(#4a9ce0, #1d68c6); }

/* virtual */
.p-virt { height: 167px; }
.virt-grid { display: grid; grid-template-columns: 119.500px 119.500px; column-gap: 15.500px; row-gap: 9px; padding: 17px 4px 0 4px; }
.v-card { height: 48px; display: flex; justify-content: space-between; padding: 7px 6px 0 8px; position: relative; }
.v-main { display: flex; flex-direction: column; }
.v-main .digi { transform-origin: left center; height: 18px; }
.v-name { font-size: 7px; line-height: 10px; margin-top: 2px; white-space: nowrap; }
.v-side { font-size: 7.500px; line-height: 12px; width: 36px; margin-top: 3px; display: flex; flex-direction: column; white-space: nowrap; }
.v-side div { display: flex; justify-content: space-between; align-items: center; height: 13px; }
.v-side .digi { font-size: 13px; line-height: 12px; transform: scaleX(.68); transform-origin: right center; margin-left: -3px; }
.v-blue { background: linear-gradient(100deg, #4a62f6, #2f8ede); }
.v-red { background: linear-gradient(100deg, #fc5560, #cf5a7a); }
.v-purple { background: linear-gradient(110deg, #7a62ea, #9a5cc6); }
.v-teal { background: linear-gradient(110deg, #18dcf0, #1dd09e); }

/* allocation */
.p-alloc { height: 202px; background: linear-gradient(#183462, #285480); }
.p-alloc h2, .p-perf h2 { background: linear-gradient(90deg, #1e3a70, #23457c 30%, #1f3f7a); }
.alloc { display: flex; height: 173px; position: relative; }
.alloc::after { content: ""; position: absolute; left: 195px; top: 13px; height: 150px; width: 1px; background: #234a78; }
.alloc-half { width: 50%; display: flex; padding: 40px 0 0 19px; }
.alloc-half + .alloc-half { padding-left: 22px; }
.donut-wrap { width: 100px; }
.donut { width: 100px; height: 100px; display: block; }
.donut-name { margin-top: 5px; text-align: center; font-size: 8.500px; font-weight: 700; line-height: 14px; }
.d-blue { stroke: #339dff; } .d-purple { stroke: #8073ee; } .d-yellow { stroke: #f6c63f; }
.d-cyan { stroke: #17c1f0; } .d-green { stroke: #52d8ab; } .d-red { stroke: #f05050; }
.legend { list-style: none; margin: 28px 0 0 16px; padding: 0; font-size: 6.500px; line-height: 12px; color: #eef3fa; white-space: nowrap; }
.legend li { position: relative; padding-left: 6px; }
.legend li::before { content: ""; position: absolute; left: 0; top: 4.500px; width: 3px; height: 3px; border-radius: 50%; }
.l-b::before { background: #339dff; } .l-p::before { background: #8073ee; } .l-y::before { background: #f6c63f; }

/* chart */
.p-perf { height: 243px; background: linear-gradient(#183462, #285480); }
.chart { display: block; width: 391px; height: 214px; }
.leg-t text { font-size: 6.200px; fill: #eef3fa; }
.ax-t text { font-size: 7.500px; font-weight: 700; fill: #e8eef6; }
.axis { fill: none; stroke: #8ea6c4; stroke-width: 1; }
.s-c { fill: #1fb9ff; } .s-p { fill: #5a68f5; } .s-y { fill: #f6c258; } .s-r { fill: #ef4d5e; }
.trend { fill: none; stroke: #ef4d5e; stroke-width: 1.300; stroke-dasharray: 2.500 .8; }

/* tables */
.p-table { height: 223px; background: #19335c; }
.rank { width: 229px; margin: 17px 0 0 15px; border-collapse: collapse; table-layout: fixed; }
.rank th { height: 15px; background: #1c3a68; border-bottom: 1px solid #3fb6c8; font-size: 8px; font-weight: 400; color: #f4f7fb; padding: 0; }
.rank td { height: 22.800px; background: #1f4172; border: 1px solid #26497c; border-top: 0; text-align: center; font-size: 7.500px; color: #f2f6fb; padding: 0; }
.rank tr td:first-child { border-left: 0; }
.rank tr td:last-child { border-right: 0; }

/* bottom bar */
.bottombar { height: 21px; flex: none; background: #fff; display: flex; align-items: stretch; color: #555; border-top: 1px solid #ddd; font-size: 8px; }
.sheet { width: 81px; display: flex; align-items: center; gap: 3px; padding-left: 4px; }
.sheet svg { width: 8px; height: 8px; }
.sheet-add { width: 19px; background: #f46a6a; color: #fff; font-size: 15px; line-height: 19px; text-align: center; }
.zoom-val { margin-left: auto; align-self: center; margin-right: 8px; font-size: 8.500px; }
.zoom-ico { width: 10px; height: 10px; align-self: center; margin-right: 7px; }

/* right */
.right { width: 106px; background: #444; display: flex; flex-direction: column; position: relative; border-left: 1px solid #222; }
.lib-head { padding-left: 5px; }
.lib { height: 164px; flex: none; }
.lib-grid { display: grid; grid-template-columns: repeat(6, 17.400px); padding-left: 0; border-bottom: 1px dashed #6e6e6e; justify-items: center; align-items: center; align-content: center; }
.lib-grid svg { width: 15px; height: 15px; }
.lg-1 { height: 36px; grid-auto-rows: 18px; }
.lg-2 { height: 52px; grid-auto-rows: 17.500px; }
.lg-3 { height: 23px; grid-auto-rows: 18px; }
.lg-4 { height: 34px; grid-auto-rows: 16.500px; }
.lg-5 { height: 19px; grid-auto-rows: 18px; border-bottom: 0; }
.g { fill: #2dd4a0; } .p { fill: #6a6ae8; } .y { fill: #f5c842; } .b { fill: #1f8fe0; } .gray { fill: #b8bcc8; } .brown { fill: #9a7a6a; }
.lg, .lp, .ly, .lb, .rg, .rp, .ry, .rb { fill: none; stroke-width: 1.500; }
.lg, .rg { stroke: #2dd4a0; } .lp, .rp { stroke: #6a6ae8; } .ly, .ry { stroke: #f5c842; } .lb, .rb { stroke: #1f8fe0; }
.rg { stroke-width: 3; }
.ic-t { fill: #1f8fe0; font-size: 7px; font-weight: 700; }
.ic-s { font-size: 6px; } .ic-xs { font-size: 4.500px; }
.layer-head { padding-left: 5px; }
.layers { flex: 1; overflow: hidden; }
.l-row { height: 20.700px; background: #555; border-top: 1px solid #5f5f5f; border-bottom: 1px solid #444; display: flex; align-items: center; color: #eee; font-size: 8px; white-space: nowrap; }
.l-eye { width: 15px; height: 100%; border-right: 1px solid #444; display: flex; align-items: center; justify-content: center; flex: none; }
.l-eye svg { width: 9px; height: 6px; }
.l-ico { width: 11px; height: 9px; margin: 0 3px; flex: none; }
.l-t { margin: 0 4px 0 3px; height: 10px; }
.l-123 { font-size: 6px; margin: 0 3px; border-bottom: 1px solid #eee; line-height: 6px; }
.foot-layers { background: #333; }
.lib-scroll { position: absolute; right: 0; top: 44px; width: 6px; height: 38px; background: #2c3444; border-radius: 2px 0 0 2px; padding: 12px 0 0 2px; }
.lib-scroll i { display: block; width: 3px; height: 18px; background: linear-gradient(#5a7a5a, #8aa070); }
```
